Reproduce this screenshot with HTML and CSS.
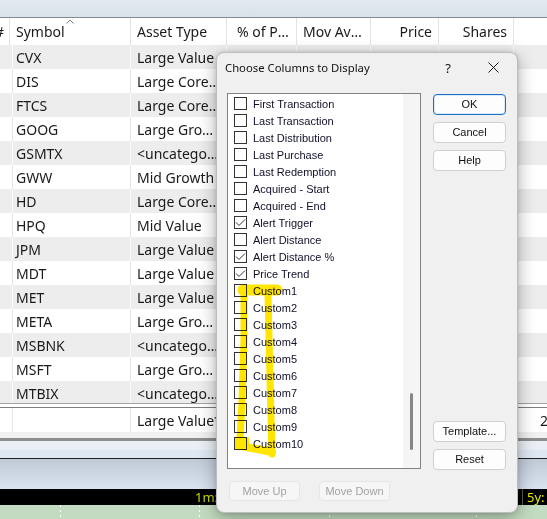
FILE: index.html
```html
<!DOCTYPE html>
<html>
<head>
<meta charset="utf-8">
<link rel="stylesheet" href="styles.css">
</head>
<body>
<div class="app">
  <div class="topband"></div>
  <div class="thead">
    <div class="cell hc c0"><span class="hash">#</span></div>
    <div class="cell hc sorted">Symbol<svg class="sortarrow" width="8" height="5" viewBox="0 0 8 5"><polyline points="0.5,4.5 4,1 7.5,4.5" fill="none" stroke="#777" stroke-width="1"/></svg></div>
    <div class="cell hc">Asset Type</div>
    <div class="cell hc pct">% of Portfolio</div>
    <div class="cell hc">Mov Avg (200)</div>
    <div class="cell hc num">Price</div>
    <div class="cell hc num">Shares</div>
    <div class="cell hc last"></div>
  </div>
  <div class="rows">
    <div class="row"><div class="cell"></div><div class="cell">CVX</div><div class="cell">Large Value</div><div class="cell"></div><div class="cell"></div><div class="cell"></div><div class="cell"></div><div class="cell last"></div></div>
    <div class="row"><div class="cell"></div><div class="cell">DIS</div><div class="cell">Large Core Blend</div><div class="cell"></div><div class="cell"></div><div class="cell"></div><div class="cell"></div><div class="cell last"></div></div>
    <div class="row"><div class="cell"></div><div class="cell">FTCS</div><div class="cell">Large Core Blend</div><div class="cell"></div><div class="cell"></div><div class="cell"></div><div class="cell"></div><div class="cell last"></div></div>
    <div class="row"><div class="cell"></div><div class="cell">GOOG</div><div class="cell">Large Growth</div><div class="cell"></div><div class="cell"></div><div class="cell"></div><div class="cell"></div><div class="cell last"></div></div>
    <div class="row"><div class="cell"></div><div class="cell">GSMTX</div><div class="cell">&lt;uncategorized&gt;</div><div class="cell"></div><div class="cell"></div><div class="cell"></div><div class="cell"></div><div class="cell last"></div></div>
    <div class="row"><div class="cell"></div><div class="cell">GWW</div><div class="cell">Mid Growth</div><div class="cell"></div><div class="cell"></div><div class="cell"></div><div class="cell"></div><div class="cell last"></div></div>
    <div class="row"><div class="cell"></div><div class="cell">HD</div><div class="cell">Large Core Blend</div><div class="cell"></div><div class="cell"></div><div class="cell"></div><div class="cell"></div><div class="cell last"></div></div>
    <div class="row"><div class="cell"></div><div class="cell">HPQ</div><div class="cell">Mid Value</div><div class="cell"></div><div class="cell"></div><div class="cell"></div><div class="cell"></div><div class="cell last"></div></div>
    <div class="row"><div class="cell"></div><div class="cell">JPM</div><div class="cell">Large Value</div><div class="cell"></div><div class="cell"></div><div class="cell"></div><div class="cell"></div><div class="cell last"></div></div>
    <div class="row"><div class="cell"></div><div class="cell">MDT</div><div class="cell">Large Value</div><div class="cell"></div><div class="cell"></div><div class="cell"></div><div class="cell"></div><div class="cell last"></div></div>
    <div class="row"><div class="cell"></div><div class="cell">MET</div><div class="cell">Large Value</div><div class="cell"></div><div class="cell"></div><div class="cell"></div><div class="cell"></div><div class="cell last"></div></div>
    <div class="row"><div class="cell"></div><div class="cell">META</div><div class="cell">Large Growth</div><div class="cell"></div><div class="cell"></div><div class="cell"></div><div class="cell"></div><div class="cell last"></div></div>
    <div class="row"><div class="cell"></div><div class="cell">MSBNK</div><div class="cell">&lt;uncategorized&gt;</div><div class="cell"></div><div class="cell"></div><div class="cell"></div><div class="cell"></div><div class="cell last"></div></div>
    <div class="row"><div class="cell"></div><div class="cell">MSFT</div><div class="cell">Large Growth</div><div class="cell"></div><div class="cell"></div><div class="cell"></div><div class="cell"></div><div class="cell last"></div></div>
    <div class="row"><div class="cell"></div><div class="cell">MTBIX</div><div class="cell">&lt;uncategorized&gt;</div><div class="cell"></div><div class="cell"></div><div class="cell"></div><div class="cell"></div><div class="cell last"></div></div>
  </div>
  <div class="totalsep"></div>
  <div class="totals">
    <div class="cell"></div><div class="cell"></div><div class="cell clip">Large Value*</div><div class="cell"></div><div class="cell"></div><div class="cell"></div><div class="cell"></div><div class="cell last tot">2</div>
  </div>
  <div class="gapband"></div>
  <div class="thickline"></div>
  <div class="lightband"></div>
  <div class="darkline"></div>
  <div class="chart"></div>
  <div class="timebar"><span class="t1">1m:</span><span class="t5">5y:</span></div>
  <div class="green"><span class="tick t-a"></span><span class="tick t-b"></span><span class="tick t-c"></span><span class="tick t-d"></span></div>
</div>

<div class="dialog">
  <div class="titlebar">
    <span class="title">Choose Columns to Display</span>
    <span class="qmark">?</span>
    <svg class="close" width="11" height="11" viewBox="0 0 11 11"><path d="M0.5 0.5 L10.5 10.5 M10.5 0.5 L0.5 10.5" stroke="#1a1a1a" stroke-width="1" fill="none"/></svg>
  </div>
  <div class="dbody">
    <div class="listbox">
      <div class="items">
        <div class="item"><span class="cb"></span>First Transaction</div>
        <div class="item"><span class="cb"></span>Last Transaction</div>
        <div class="item"><span class="cb"></span>Last Distribution</div>
        <div class="item"><span class="cb"></span>Last Purchase</div>
        <div class="item"><span class="cb"></span>Last Redemption</div>
        <div class="item"><span class="cb"></span>Acquired - Start</div>
        <div class="item"><span class="cb"></span>Acquired - End</div>
        <div class="item"><span class="cb"><svg width="11" height="11" viewBox="0 0 11 11"><polyline points="1,5.5 4,8.5 10,2.5" fill="none" stroke="#333" stroke-width="1"/></svg></span>Alert Trigger</div>
        <div class="item"><span class="cb"></span>Alert Distance</div>
        <div class="item"><span class="cb"><svg width="11" height="11" viewBox="0 0 11 11"><polyline points="1,5.5 4,8.5 10,2.5" fill="none" stroke="#333" stroke-width="1"/></svg></span>Alert Distance %</div>
        <div class="item"><span class="cb"><svg width="11" height="11" viewBox="0 0 11 11"><polyline points="1,5.5 4,8.5 10,2.5" fill="none" stroke="#333" stroke-width="1"/></svg></span>Price Trend</div>
        <div class="item"><span class="cb"></span>Custom1</div>
        <div class="item"><span class="cb"></span>Custom2</div>
        <div class="item"><span class="cb"></span>Custom3</div>
        <div class="item"><span class="cb"></span>Custom4</div>
        <div class="item"><span class="cb"></span>Custom5</div>
        <div class="item"><span class="cb"></span>Custom6</div>
        <div class="item"><span class="cb"></span>Custom7</div>
        <div class="item"><span class="cb"></span>Custom8</div>
        <div class="item"><span class="cb"></span>Custom9</div>
        <div class="item"><span class="cb"></span>Custom10</div>
      </div>
      <div class="scrolltrack"><div class="thumb"></div></div>
    </div>
    <div class="btncol">
      <div class="btngroup">
        <div class="btn default">OK</div>
        <div class="btn">Cancel</div>
        <div class="btn">Help</div>
      </div>
      <div class="btngroup">
        <div class="btn">Template...</div>
        <div class="btn">Reset</div>
      </div>
    </div>
  </div>
  <div class="dfoot">
    <div class="btn disabled">Move Up</div>
    <div class="btn disabled">Move Down</div>
  </div>
</div>

<svg class="marker" width="547" height="519" viewBox="0 0 547 519">
  <g fill="none" stroke="#ffe500" stroke-linecap="round" stroke-linejoin="round">
    <path d="M243 290 L277 290" stroke-width="11"/>
    <path d="M244 292 L244 340 L242 400 L240 440" stroke-width="7"/>
    <path d="M241 446 L272 452" stroke-width="8"/>
    <path d="M268 294 L270 380 L272 454" stroke-width="7"/>
    <path d="M236 438 L248 438 L248 448 L236 448 Z" stroke-width="2" fill="#ffe500"/>
  </g>
</svg>
</body>
</html>
```
FILE: styles.css
```css
* { box-sizing: border-box; }
html, body { margin: 0; padding: 0; }
body {
  width: 547px;
  height: 519px;
  overflow: hidden;
  position: relative;
  background: #fff;
  font-family: "Noto Sans", "Open Sans", sans-serif;
}
.app {
  display: flex;
  flex-direction: column;
  height: 519px;
}
.topband {
  height: 18px;
  flex: none;
  background: linear-gradient(#e3e9f0, #d9e1ea);
  border-bottom: 1px solid #8a8a8a;
}
.thead, .row, .totals {
  display: grid;
  grid-template-columns: 10px 121px 96px 70px 74px 68px 75px 1fr;
}
.thead { height: 27px; flex: none; background: #fff; }
.cell {
  border-right: 1px solid #e4e4e4;
  padding: 0 6px;
  white-space: nowrap;
  overflow: hidden;
  text-overflow: ellipsis;
  font-size: 14px;
  line-height: 25px;
  color: #1a1a1a;
}
.cell.clip { text-overflow: clip; }
.cell.last { border-right: none; }
.hc { line-height: 28px; }
.c0 { padding: 0; text-overflow: clip; }
.hash { display: inline-block; margin-left: -5px; }
.sorted { position: relative; overflow: visible; }
.sortarrow { position: absolute; left: 56px; top: 1px; }
.pct { padding: 0 2px 0 10px; }
.num { text-align: right; }
.rows { height: 358px; flex: none; overflow: hidden; }
.row { height: 24px; }
.row:nth-child(odd) { background: #ededed; }
.row:nth-child(odd) .cell { border-right-color: #fafafa; }
.totalsep {
  height: 5px;
  flex: none;
  background: #fff;
  border-top: 1px solid #a4a4a4;
  border-bottom: 1px solid #7e7e7e;
}
.totals { height: 24px; flex: none; background: #fff; }
.tot { padding-left: 26px; text-overflow: clip; }
.gapband { height: 6px; flex: none; background: #f0f0f0; }
.thickline { height: 3px; flex: none; background: #8e8e8e; }
.lightband { height: 17px; flex: none; background: linear-gradient(#eaeff5 0, #eaeff5 50%, #dfe8f2 55%, #dfe8f2 100%); }
.darkline { height: 1px; flex: none; background: #222; }
.chart { height: 30px; flex: none; background: linear-gradient(#bfcad7, #d9e3ef); }
.timebar {
  height: 16px;
  flex: none;
  background: #000;
  display: flex;
  align-items: center;
  font-family: "Noto Sans", sans-serif;
  font-size: 13px;
  line-height: 16px;
}
.t1 { color: #c9dc00; margin-left: 195px; }
.t5 { color: #e6e600; margin-left: auto; padding-left: 4px; width: 25px; border-left: 1px solid #555; }
.green {
  flex: 1;
  background: #c3dcc1;
  display: flex;
}
.tick {
  width: 1px;
  height: 100%;
  background: repeating-linear-gradient(#fff 0, #fff 2px, transparent 2px, transparent 5px);
  flex: none;
}
.t-a { margin-left: 60px; }
.t-b { margin-left: 138px; }
.t-c { margin-left: 129px; }
.t-d { margin-left: 146px; }

/* dialog */
.dialog {
  position: absolute;
  left: 216px;
  top: 52px;
  width: 302px;
  height: 461px;
  background: #f0f0f0;
  border: 1px solid #bdbdbd;
  border-radius: 8px;
  box-shadow: 0 5px 18px rgba(0, 0, 0, 0.32), 0 0 4px rgba(0, 0, 0, 0.12);
  display: flex;
  flex-direction: column;
  font-family: "Liberation Sans", Arial, sans-serif;
}
.titlebar {
  height: 29px;
  flex: none;
  display: flex;
  align-items: center;
  padding-left: 8px;
  font-family: "Noto Sans", sans-serif;
  font-size: 11.3px;
  color: #111;
}
.title { flex: none; }
.qmark { margin-left: auto; font-size: 13px; margin-right: 37px; }
.close { margin-right: 18px; flex: none; }
.dbody {
  display: flex;
  padding: 11px 11px 0 10px;
  gap: 12px;
}
.listbox {
  width: 194px;
  height: 376px;
  flex: none;
  background: #fff;
  border: 1px solid #828282;
  display: flex;
}
.items {
  flex: 1;
  padding: 1px 0 0 6px;
}
.item {
  height: 17px;
  display: flex;
  align-items: center;
  font-size: 11px;
  color: #10102a;
  white-space: nowrap;
}
.cb {
  width: 13px;
  height: 13px;
  border: 1px solid #333;
  background: #fff;
  margin-right: 6px;
  flex: none;
  display: flex;
  align-items: center;
  justify-content: center;
}
.cb svg { display: block; }
.scrolltrack {
  width: 17px;
  flex: none;
  background: #f5f5f5;
  display: flex;
  flex-direction: column;
  align-items: center;
}
.thumb {
  width: 3px;
  height: 57px;
  margin-top: 299px;
  background: #868686;
  border-radius: 2px;
}
.btncol {
  width: 73px;
  height: 377px;
  flex: none;
  display: flex;
  flex-direction: column;
  justify-content: space-between;
  padding-top: 1px;
}
.btngroup { display: flex; flex-direction: column; gap: 7px; }
.btn {
  height: 21px;
  background: #fdfdfd;
  border: 1px solid #d0d0d0;
  border-radius: 4px;
  font-size: 11px;
  line-height: 19px;
  text-align: center;
  color: #111;
}
.btn.default { border: 1px solid #1a6fc4; box-shadow: inset 0 0 0 1px #dbe9f7; }
.dfoot {
  display: flex;
  gap: 19px;
  padding: 11px 0 0 12px;
}
.btn.disabled {
  width: 71px;
  height: 20px;
  background: #f6f6f6;
  border-color: #e6e6e6;
  color: #a2a2a2;
}
.marker {
  position: absolute;
  left: 0;
  top: 0;
  pointer-events: none;
  mix-blend-mode: multiply;
}
```
